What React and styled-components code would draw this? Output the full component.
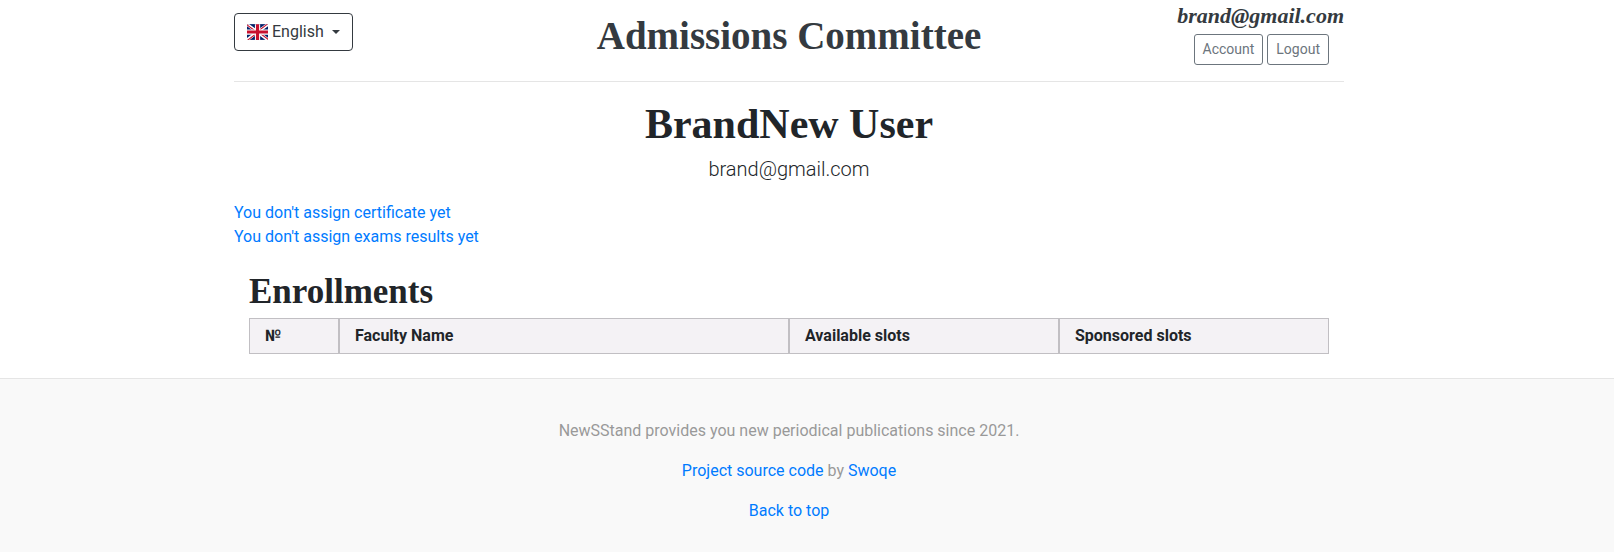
import React from "react";
import styled, { createGlobalStyle } from "styled-components";

const serif = '"Liberation Serif", serif';

const GlobalStyle = createGlobalStyle`
  *, *::before, *::after { box-sizing: border-box; }
  body {
    margin: 0;
    background: #fff;
    color: #212529;
    font: 400 16px/24px Roboto, sans-serif;
  }
  h1, h2, p { margin: 0; }
`;

const Page = styled.div`
  padding-right: 36px;
`;

const Container = styled.div`
  max-width: 1110px;
  margin: 0 auto;
`;

const Header = styled.header`
  display: grid;
  grid-template-columns: 1fr auto 1fr;
  align-items: center;
  height: 82px;
  border-bottom: 1px solid #e5e5e5;
`;

const Brand = styled.a`
  color: #343a40;
  font: 700 39px/48px ${serif};
  text-decoration: none;
  margin-bottom: 10px;
`;

const LanguageButton = styled.button`
  display: flex;
  align-items: center;
  justify-self: start;
  height: 38px;
  padding: 0 12px;
  margin-bottom: 18px;
  gap: 4px;
  color: #343a40;
  background: transparent;
  border: 1px solid #343a40;
  border-radius: 4px;
  font: inherit;
`;

const Caret = styled.span`
  margin-left: 4px;
  border-top: 4px solid;
  border-left: 4px solid transparent;
  border-right: 4px solid transparent;
`;

const Profile = styled.div`
  justify-self: end;
  align-self: start;
  display: flex;
  flex-direction: column;
  align-items: flex-end;
  gap: 4px;
  padding-top: 2px;
`;

const ProfileName = styled.span`
  color: #343a40;
  font: italic 700 22px/28px ${serif};
`;

const Actions = styled.div`
  display: flex;
  gap: 4px;
  padding-right: 15px;
`;

const ActionLink = styled.a`
  padding: 4px 8px;
  border: 1px solid #6c757d;
  border-radius: 3px;
  color: #6c757d;
  font-size: 14px;
  line-height: 21px;
  text-decoration: none;
`;

const Intro = styled.section`
  padding: 18px 0 17px;
  text-align: center;
`;

const UserName = styled.h1`
  font: 700 42px/48px ${serif};
  margin-bottom: 6px;
`;

const Lead = styled.p`
  font-size: 20px;
  font-weight: 300;
  line-height: 30px;
`;

const Link = styled.a`
  color: #007bff;
  text-decoration: none;
`;

const Notices = styled.nav`
  display: flex;
  flex-direction: column;
  align-items: flex-start;
`;

const Enrollments = styled.section`
  padding: 24px 15px;
`;

const SectionTitle = styled.h2`
  font: 700 35px/38px ${serif};
  margin-bottom: 7px;
`;

const Table = styled.table`
  width: 100%;
  table-layout: fixed;
  border-collapse: separate;
  border-spacing: 0;
`;

const HeadCell = styled.th`
  width: ${(p) => p.$share};
  height: 36px;
  padding: 0 15px;
  text-align: left;
  background: #f4f2f5;
  border: 1px solid #c1bfc3;
`;

const Footer = styled.footer`
  display: flex;
  flex-direction: column;
  align-items: center;
  gap: 16px;
  padding: 40px 36px 40px 0;
  color: #999;
  background: #f9f9f9;
  border-top: 1px solid #e5e5e5;
`;

const Flag = () => (
  <svg width="21" height="16" viewBox="0 0 640 480" aria-hidden="true">
    <path fill="#012169" d="M0 0h640v480H0z" />
    <path fill="#fff" d="m75 0 244 181L562 0h78v62L400 241l240 178v61h-80L320 301 81 480H0v-60l239-178L0 64V0z" />
    <path fill="#c8102e" d="m424 281 216 159v40L369 281zm-184 20 6 35L54 480H0zM640 0v3L391 191l2-44L590 0zM0 0l239 176h-60L0 42z" />
    <path fill="#fff" d="M241 0v480h160V0zM0 160v160h640V160z" />
    <path fill="#c8102e" d="M0 193v96h640v-96zM273 0v480h96V0z" />
  </svg>
);

const columns = [
  ["№", "8.3333%"],
  ["Faculty Name", "41.6667%"],
  ["Available slots", "25%"],
  ["Sponsored slots", "25%"],
];

export default function App() {
  return (
    <>
      <GlobalStyle />
      <Page>
        <Container>
          <Header>
            <LanguageButton type="button" aria-haspopup="true">
              <Flag />
              English
              <Caret />
            </LanguageButton>
            <Brand href="#">Admissions Committee</Brand>
            <Profile>
              <ProfileName>brand@gmail.com</ProfileName>
              <Actions>
                <ActionLink href="#">Account</ActionLink>
                <ActionLink href="#">Logout</ActionLink>
              </Actions>
            </Profile>
          </Header>
          <main>
            <Intro>
              <UserName>BrandNew User</UserName>
              <Lead>brand@gmail.com</Lead>
            </Intro>
            <Notices>
              <Link href="#">You don't assign certificate yet</Link>
              <Link href="#">You don't assign exams results yet</Link>
            </Notices>
            <Enrollments>
              <SectionTitle>Enrollments</SectionTitle>
              <Table>
                <thead>
                  <tr>
                    {columns.map(([label, share]) => (
                      <HeadCell key={label} scope="col" $share={share}>{label}</HeadCell>
                    ))}
                  </tr>
                </thead>
              </Table>
            </Enrollments>
          </main>
        </Container>
      </Page>
      <Footer>
        <p>NewSStand provides you new periodical publications since 2021.</p>
        <p>
          <Link href="#">Project source code</Link> by <Link href="#">Swoqe</Link>
        </p>
        <p>
          <Link href="#">Back to top</Link>
        </p>
      </Footer>
    </>
  );
}
